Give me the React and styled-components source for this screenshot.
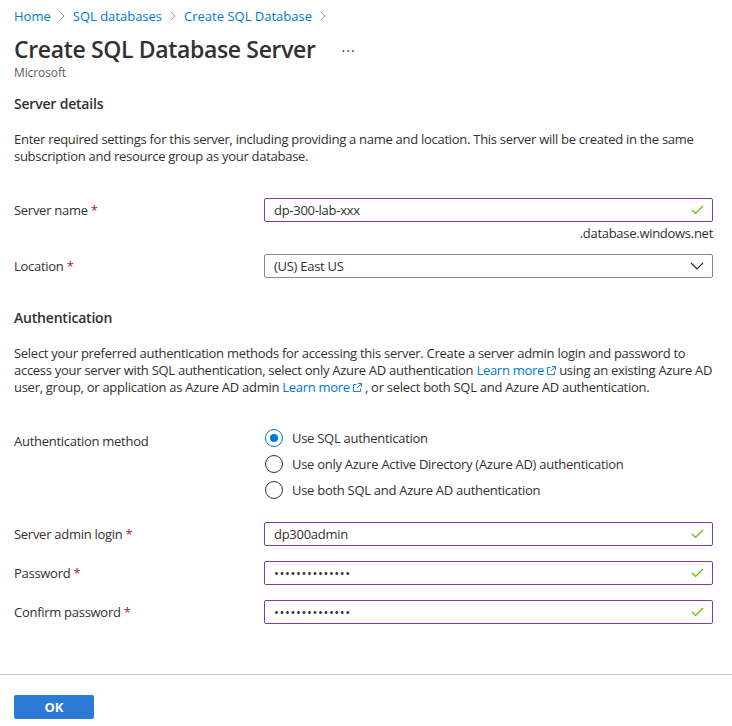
import React from "react";
import styled, { createGlobalStyle } from "styled-components";

const GlobalStyle = createGlobalStyle`
  body {
    margin: 0;
    background: #ffffff;
    font-family: "Segoe UI", "Open Sans", "Noto Sans", sans-serif;
    color: #323130;
  }
`;

const Page = styled.div`
  display: flex;
  flex-direction: column;
  width: 732px;
  min-height: 726px;
  letter-spacing: -0.28px;
`;
const Content = styled.div`
  display: flex;
  flex-direction: column;
  padding: 7px 19px 0 14px;
`;
const Crumbs = styled.div`
  display: flex;
  align-items: center;
  gap: 7px;
  height: 18px;
  font-size: 13px;
  letter-spacing: 0;
`;
const Crumb = styled.span`
  color: #0078d4;
`;
const Sep = styled.span`
  display: flex;
  color: #a19f9d;
`;
const TitleRow = styled.div`
  display: flex;
  align-items: center;
  margin-top: 8px;
  height: 32px;
`;
const Title = styled.h1`
  margin: 0;
  font-size: 23px;
  font-weight: 600;
  line-height: 32px;
  letter-spacing: -0.35px;
`;
const More = styled.span`
  margin-left: 26px;
  font-size: 14px;
  letter-spacing: 1px;
  color: #323130;
  transform: translateY(-3px);
`;
const Publisher = styled.div`
  font-size: 12px;
  line-height: 16px;
  color: #605e5c;
  letter-spacing: -0.1px;
`;
const Heading = styled.h2`
  margin: ${(p) => p.$top}px 0 0;
  font-size: 14px;
  font-weight: 600;
  line-height: 20px;
  letter-spacing: -0.2px;
`;
const Para = styled.p`
  margin: ${(p) => p.$top}px 0 0;
  font-size: 13px;
  line-height: 17px;
  white-space: nowrap;
`;
const Link = styled.span`
  color: #0078d4;
  white-space: nowrap;
`;
const Row = styled.div`
  display: grid;
  grid-template-columns: 250px 1fr;
  align-items: ${(p) => (p.$top ? "start" : "center")};
  margin-top: ${(p) => p.$gap}px;
`;
const Label = styled.label`
  font-size: 13px;
  line-height: 18px;
  padding-top: ${(p) => (p.$pad ? p.$pad : 0)}px;
`;
const Star = styled.span`
  color: #a4262c;
`;
const Field = styled.div`
  display: flex;
  align-items: center;
  justify-content: space-between;
  box-sizing: border-box;
  height: 24px;
  padding: 0 8px 0 9px;
  border: 1px solid ${(p) => (p.$plain ? "#8a8886" : "#8a35a9")};
  border-radius: 2px;
  font-size: 13px;
`;
const Dots = styled.span`
  font-size: 13px;
  letter-spacing: 0.6px;
`;
const Hint = styled.div`
  grid-column: 2;
  text-align: right;
  font-size: 13px;
  line-height: 16px;
  margin-top: 3px;
`;
const Radios = styled.div`
  display: flex;
  flex-direction: column;
  gap: 6px;
`;
const Radio = styled.div`
  display: flex;
  align-items: center;
  gap: 9px;
  height: 20px;
  font-size: 13px;
`;
const Circle = styled.span`
  position: relative;
  box-sizing: border-box;
  width: 18px;
  height: 18px;
  margin-left: 1px;
  border-radius: 50%;
  border: 1px solid ${(p) => (p.$on ? "#0078d4" : "#323130")};
  &::after {
    content: "";
    display: ${(p) => (p.$on ? "block" : "none")};
    position: absolute;
    left: 4px;
    top: 4px;
    width: 8px;
    height: 8px;
    border-radius: 50%;
    background: #0078d4;
  }
`;
const Footer = styled.div`
  margin-top: 50px;
  border-top: 1px solid #c8c6c4;
  padding: 20px 14px 0;
`;
const Button = styled.button`
  width: 80px;
  height: 24px;
  border: none;
  border-radius: 2px;
  background: #2b7bd6;
  color: #ffffff;
  font-family: inherit;
  font-size: 13px;
  font-weight: 700;
`;

const Chevron = () => (
  <svg width="8" height="10" viewBox="0 0 8 10">
    <path d="M2 1l4 4-4 4" fill="none" stroke="#a19f9d" strokeWidth="1" />
  </svg>
);
const Check = () => (
  <svg width="13" height="10" viewBox="0 0 13 10">
    <path d="M1 5l3.5 3.5L12 1" fill="none" stroke="#6bb700" strokeWidth="1.2" />
  </svg>
);
const Down = () => (
  <svg width="14" height="8" viewBox="0 0 14 8">
    <path d="M1 1l6 6 6-6" fill="none" stroke="#323130" strokeWidth="1.2" />
  </svg>
);
const Ext = () => (
  <svg width="9" height="9" viewBox="0 0 9 9" style={{ marginLeft: 3 }}>
    <path d="M5 0.5h3.5V4M8.5 0.5L4 5M3.5 1.5H0.5v7h7v-3" fill="none" stroke="#0078d4" strokeWidth="0.9" />
  </svg>
);

const App = () => {
  return (
    <Page>
      <GlobalStyle />
      <Content>
        <Crumbs>
          <Crumb>Home</Crumb>
          <Sep><Chevron /></Sep>
          <Crumb>SQL databases</Crumb>
          <Sep><Chevron /></Sep>
          <Crumb>Create SQL Database</Crumb>
          <Sep><Chevron /></Sep>
        </Crumbs>
        <TitleRow>
          <Title>Create SQL Database Server</Title>
          <More>...</More>
        </TitleRow>
        <Publisher>Microsoft</Publisher>

        <Heading $top={13}>Server details</Heading>
        <Para $top={17}>
          Enter required settings for this server, including providing a name and location. This server will be created in the same
          <br />
          subscription and resource group as your database.
        </Para>

        <Row $gap={33}>
          <Label>Server name <Star>*</Star></Label>
          <Field>
            <span>dp-300-lab-xxx</span>
            <Check />
          </Field>
          <Hint>.database.windows.net</Hint>
        </Row>
        <Row $gap={13}>
          <Label>Location <Star>*</Star></Label>
          <Field $plain>
            <span>(US) East US</span>
            <Down />
          </Field>
        </Row>

        <Heading $top={30}>Authentication</Heading>
        <Para $top={17}>
          Select your preferred authentication methods for accessing this server. Create a server admin login and password to
          <br />
          access your server with SQL authentication, select only Azure AD authentication <Link>Learn more<Ext /></Link> using an existing Azure AD
          <br />
          user, group, or application as Azure AD admin <Link>Learn more<Ext /></Link> , or select both SQL and Azure AD authentication.
        </Para>

        <Row $gap={32} $top>
          <Label $pad={4}>Authentication method</Label>
          <Radios>
            <Radio><Circle $on />Use SQL authentication</Radio>
            <Radio><Circle />Use only Azure Active Directory (Azure AD) authentication</Radio>
            <Radio><Circle />Use both SQL and Azure AD authentication</Radio>
          </Radios>
        </Row>

        <Row $gap={22}>
          <Label>Server admin login <Star>*</Star></Label>
          <Field>
            <span>dp300admin</span>
            <Check />
          </Field>
        </Row>
        <Row $gap={15}>
          <Label>Password <Star>*</Star></Label>
          <Field>
            <Dots>••••••••••••••</Dots>
            <Check />
          </Field>
        </Row>
        <Row $gap={15}>
          <Label>Confirm password <Star>*</Star></Label>
          <Field>
            <Dots>••••••••••••••</Dots>
            <Check />
          </Field>
        </Row>
      </Content>
      <Footer>
        <Button>OK</Button>
      </Footer>
    </Page>
  );
};

export default App;
